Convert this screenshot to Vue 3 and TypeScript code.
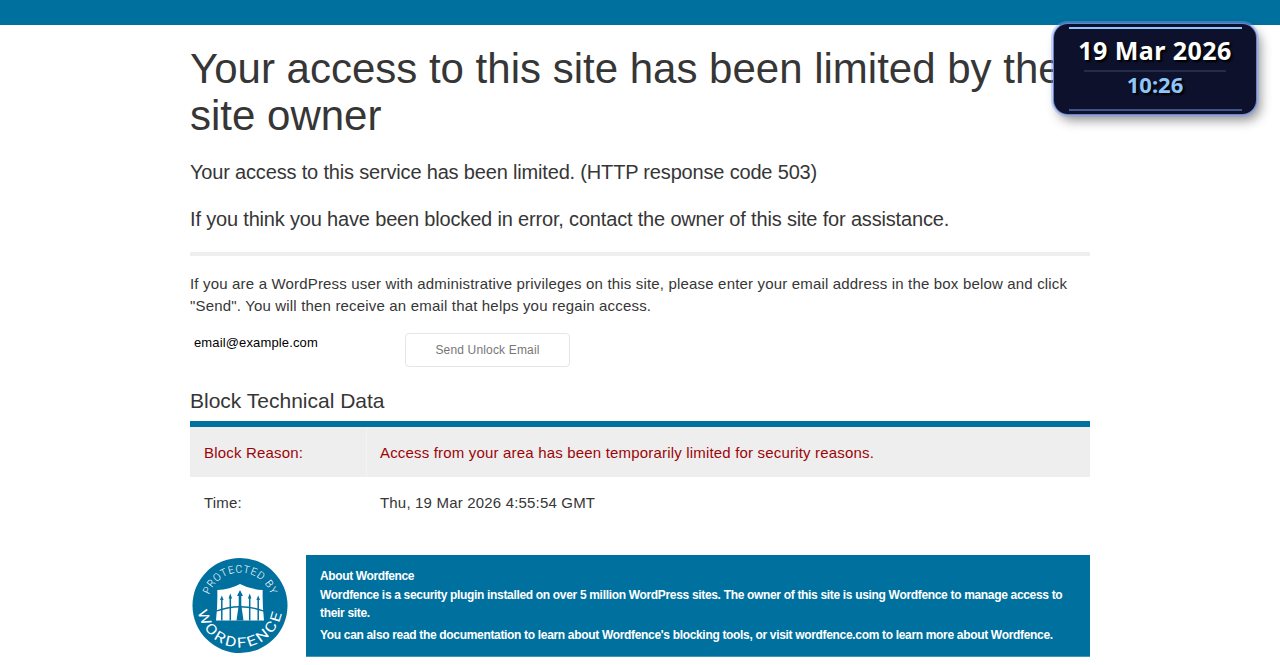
<script setup lang="ts">
interface BlockRow {
  label: string
  value: string
  reason: boolean
}

const rows: BlockRow[] = [
  { label: 'Block Reason:', value: 'Access from your area has been temporarily limited for security reasons.', reason: true },
  { label: 'Time:', value: 'Thu, 19 Mar 2026 4:55:54 GMT', reason: false },
]
</script>

<template>
  <div class="page">
    <div class="topbar"></div>
    <main class="content">
      <h1>Your access to this site has been limited by the site owner</h1>
      <p class="lead">Your access to this service has been limited. (HTTP response code 503)</p>
      <p class="lead">If you think you have been blocked in error, contact the owner of this site for assistance.</p>
      <hr />
      <p class="intro">If you are a WordPress user with administrative privileges on this site, please enter your email address in the box below and click "Send". You will then receive an email that helps you regain access.</p>
      <form class="unlock" @submit.prevent>
        <span class="email">email@example.com</span>
        <button type="submit">Send Unlock Email</button>
      </form>
      <h2>Block Technical Data</h2>
      <div class="table">
        <div v-for="row in rows" :key="row.label" class="row" :class="{ reason: row.reason }">
          <div class="label">{{ row.label }}</div>
          <div class="value">{{ row.value }}</div>
        </div>
      </div>
      <section class="about">
        <svg class="logo" viewBox="0 0 96 96" width="96" height="96">
          <defs>
            <path id="arc-top" d="M15.5 48 A32.5 32.5 0 0 1 80.5 48" />
            <path id="arc-bottom" d="M5.5 48 A42.5 42.5 0 0 0 90.5 48" />
          </defs>
          <circle cx="48" cy="48.5" r="47.5" fill="#00709e" />
          <text class="ring top"><textPath href="#arc-top" startOffset="50%" text-anchor="middle" textLength="81">PROTECTED BY</textPath></text>
          <text class="ring bottom"><textPath href="#arc-bottom" startOffset="50%" text-anchor="middle" textLength="120" lengthAdjust="spacingAndGlyphs">WORDFENCE</textPath></text>
          <path d="M25.3 33 Q38 32.5 48 27 Q58 32.5 70.7 33 Q70.3 48 72 63.5 H24 Q25.7 48 25.3 33Z" fill="#fff" />
          <g fill="none" stroke="#00709e">
            <path d="M23 54.5 Q48 45 73 54.5" stroke-width="1.3" />
            <path d="M29.8 63.5V42M38.3 63.5V40M57.7 63.5V40M66.2 63.5V42" stroke-width="1.5" />
          </g>
          <g fill="#00709e">
            <path d="M29.8 38.5L31.6 43H28ZM38.3 36.5L40.1 41.5H36.5ZM57.7 36.5L59.5 41.5H55.9ZM66.2 38.5L68 43H64.4Z" />
            <path d="M48 33L51 39H49.3V48L51.5 63.5H44.5L46.7 48V39H45Z" />
          </g>
        </svg>
        <div class="about-box">
          <h3>About Wordfence</h3>
          <p>Wordfence is a security plugin installed on over 5 million WordPress sites. The owner of this site is using Wordfence to manage access to their site.</p>
          <p>You can also read the documentation to learn about Wordfence's blocking tools, or visit wordfence.com to learn more about Wordfence.</p>
        </div>
      </section>
    </main>
    <aside class="clock">
      <div class="date">19 Mar 2026</div>
      <div class="time">10:26</div>
    </aside>
  </div>
</template>

<style>
body {
  margin: 0;
  background: #fff;
}
</style>

<style scoped>
.page {
  position: relative;
  height: 665px;
  overflow: hidden;
  font-family: "Liberation Sans", Arial, sans-serif;
  font-size: 15px;
  color: #363636;
}
.topbar {
  height: 25px;
  background: #00709e;
}
.content {
  width: 900px;
  margin: 0 auto;
}
h1 {
  margin: 20px 0 0;
  font-size: 42px;
  line-height: 47px;
  font-weight: 400;
}
.lead {
  margin: 19px 0 0;
  font-size: 20px;
  line-height: 29px;
  letter-spacing: -0.174px;
}
.lead + .lead {
  margin-top: 18px;
}
hr {
  height: 4px;
  margin: 18px 0 17px;
  border: 0;
  background: #eee;
}
.intro {
  margin: 0;
  line-height: 22px;
  letter-spacing: 0.175px;
}
.unlock {
  display: flex;
  align-items: flex-start;
  height: 34px;
  margin-top: 16px;
}
.email {
  box-sizing: border-box;
  width: 215px;
  padding: 2px 4px;
  font-size: 13px;
  line-height: 15px;
  letter-spacing: 0.14px;
  color: #000;
}
button {
  box-sizing: border-box;
  width: 165px;
  height: 34px;
  padding: 0;
  border: 1px solid #e5e5e5;
  border-radius: 4px;
  background: #fff;
  color: #777;
  font: 12px "Liberation Sans", Arial, sans-serif;
  letter-spacing: 0.16px;
}
h2 {
  margin: 20px 0 6px;
  font-size: 21px;
  line-height: 28px;
  font-weight: 400;
}
.table {
  border-top: 6px solid #00709e;
}
.row {
  display: flex;
  height: 50px;
  line-height: 52px;
  letter-spacing: 0.18px;
}
.row.reason {
  background: #eee;
  color: #9c0508;
}
.label {
  box-sizing: border-box;
  width: 177px;
  padding-left: 14px;
}
.reason .label {
  border-right: 1px solid #f3f3f3;
}
.value {
  padding-left: 13px;
}
.about {
  display: flex;
  margin-top: 28px;
}
.logo {
  flex: none;
  margin: 2px 18px 0 2px;
}
.ring {
  font-family: Roboto, sans-serif;
  fill: #fff;
}
.ring.top {
  font-size: 10.5px;
  font-weight: 300;
}
.ring.bottom {
  font-size: 14px;
  letter-spacing: 1.6px;
}
.about-box {
  box-sizing: border-box;
  flex: 1;
  height: 102px;
  padding: 12px 14px;
  border-bottom: 1px solid #4296b7;
  background: #00709e;
  color: #fff;
  font-size: 12px;
  line-height: 18px;
  font-weight: 700;
  letter-spacing: -0.325px;
}
.about-box h3 {
  margin: 0 0 1px;
  font-size: 12px;
  letter-spacing: -0.38px;
}
.about-box p {
  margin: 0 -10px 4px 0;
}
.clock {
  position: absolute;
  top: 24px;
  left: 1054px;
  box-sizing: border-box;
  width: 202px;
  height: 90px;
  border-radius: 14px;
  background: #0d112b;
  box-shadow: 0 0 0 1px #6c82cd, 0 0 0 3px rgba(130, 160, 240, 0.4), 4px 6px 12px rgba(0, 0, 0, 0.45);
  font-family: "Noto Sans", "Open Sans", sans-serif;
  font-weight: 700;
  text-align: center;
  text-shadow: 2px 2px 2px #000;
}
.clock::before,
.clock::after {
  content: "";
  position: absolute;
  left: 15px;
  right: 14px;
  height: 2px;
}
.clock::before {
  top: 3px;
  background: #90c5fa;
}
.clock::after {
  bottom: 3px;
  background: #42558b;
}
.date {
  display: flex;
  justify-content: center;
  margin: 10px 30px 0;
  height: 36px;
  border-bottom: 2px solid #232c4b;
  color: #fff;
  font-size: 25px;
  line-height: 33px;
  letter-spacing: 0.45px;
  white-space: nowrap;
}
.time {
  color: #90c5fa;
  font-size: 22px;
  line-height: 25px;
}
</style>
